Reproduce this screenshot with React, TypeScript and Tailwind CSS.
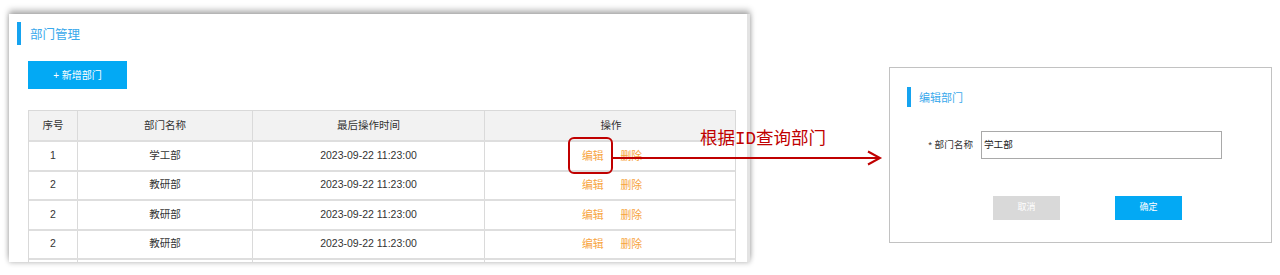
const font = { fontFamily: '"Liberation Sans", "Noto Sans CJK SC", sans-serif' };

const rows = [
  { no: '1', name: '学工部', time: '2023-09-22 11:23:00' },
  { no: '2', name: '教研部', time: '2023-09-22 11:23:00' },
  { no: '2', name: '教研部', time: '2023-09-22 11:23:00' },
  { no: '2', name: '教研部', time: '2023-09-22 11:23:00' }
];

const cols = 'grid grid-cols-[49px_175px_232px_252px]';

const Cell = ({ children, last }: { children?: React.ReactNode; last?: boolean }) => (
  <div className={`flex items-center justify-center ${last ? '' : 'border-r border-[#dadada]'}`}>{children}</div>
);

const DeptTable = () => (
  <div className="w-[708px] border-x border-t border-[#d9d9d9] text-[10.5px] text-[#333]">
    <div className={`${cols} h-[31px] border-b-2 border-[#dedede] bg-[#f2f2f2]`}>
      <Cell>序号</Cell>
      <Cell>部门名称</Cell>
      <Cell>最后操作时间</Cell>
      <Cell last>操作</Cell>
    </div>
    {rows.map((row, index) => (
      <div key={index} className={`${cols} h-[29.5px] border-b-2 border-[#dedede] bg-white`}>
        <Cell>{row.no}</Cell>
        <Cell>{row.name}</Cell>
        <Cell>{row.time}</Cell>
        <Cell last>
          <div className="flex gap-[17px] pl-[2px] text-[10.8px] text-[#f7a440]">
            <span>编辑</span>
            <span>删除</span>
          </div>
        </Cell>
      </div>
    ))}
    {/* next row is cut off by the panel edge */}
    <div className={`${cols} h-[29.5px] bg-white`}>
      <Cell />
      <Cell />
      <Cell />
      <Cell last />
    </div>
  </div>
);

const SectionTitle = ({ text, size }: { text: string; size: string }) => (
  <div className="flex items-center">
    <div className={`w-[4px] bg-[#15a3f0] ${size === 'lg' ? 'h-[23px]' : 'h-[20px]'}`} />
    <span
      className={`text-[#3aa9ec] ${size === 'lg' ? 'ml-[9px] mt-[4px] text-[12.5px]' : 'ml-[8px] mt-[2px] text-[11px]'}`}
    >
      {text}
    </span>
  </div>
);

export default function App() {
  return (
    <div className="relative flex h-[275px] w-[1280px] items-start overflow-hidden bg-white" style={font}>
      <div className="ml-[9px] mt-[14px] h-[248px] w-[741px] overflow-hidden border-r-[3px] border-[#e3e3e3] bg-white shadow-[0_-4px_6px_rgba(0,0,0,0.28),0_1px_5px_rgba(0,0,0,0.22)]">
        <div className="pl-[8px] pt-[8px]">
          <SectionTitle text="部门管理" size="lg" />
        </div>
        <div className="ml-[19px] mt-[16px] flex h-[28px] w-[99px] items-center justify-center bg-[#03a9f4] text-[10px] text-white">
          + 新增部门
        </div>
        <div className="ml-[19px] mt-[21px]">
          <DeptTable />
        </div>
      </div>

      <div className="ml-[139px] mt-[67px] h-[176px] w-[383px] border border-[#c2c2c2] bg-white">
        <div className="pl-[17px] pt-[19px]">
          <SectionTitle text="编辑部门" size="sm" />
        </div>
        <div className="mt-[24px] flex items-center">
          <div className="w-[83px] text-right text-[9.6px] text-[#333]">* 部门名称</div>
          <div className="ml-[8px] flex h-[28px] w-[241px] items-center border border-[#a9a9a9] pl-[2px] text-[9.6px] text-[#222]">
            学工部
          </div>
        </div>
        <div className="mt-[37px] flex pl-[103px]">
          <div className="flex h-[24px] w-[67px] items-center justify-center bg-[#d9d9d9] text-[9px] text-white">取消</div>
          <div className="ml-[55px] flex h-[24px] w-[67px] items-center justify-center bg-[#03a9f4] text-[9px] text-white">确定</div>
        </div>
      </div>

      <div className="absolute left-[568px] top-[137px] h-[37px] w-[45px] rounded-[6px] border-2 border-[#c00000]" />
      <svg className="absolute left-[612px] top-[148px]" width="272" height="20" viewBox="0 0 272 20">
        <line x1="0" y1="10" x2="267" y2="10" stroke="#c00000" strokeWidth="2" />
        <polyline points="256,3.5 268,10 256,16.5" fill="none" stroke="#c00000" strokeWidth="2" />
      </svg>
      <div
        className="absolute left-[700px] top-[127px] text-[17.5px] leading-[24px] text-[#c00000]"
        style={{ fontFamily: '"Liberation Mono", "Noto Sans CJK SC", monospace' }}
      >
        根据ID查询部门
      </div>
    </div>
  );
}
